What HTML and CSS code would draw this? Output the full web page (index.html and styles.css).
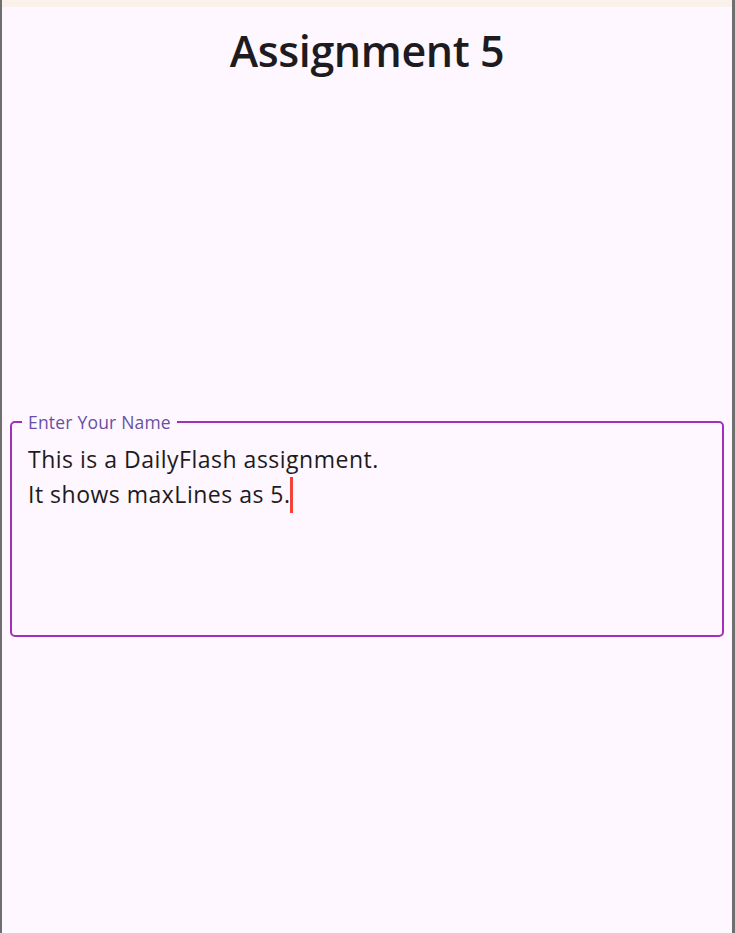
FILE: index.html
```html
<!DOCTYPE html>
<html>
<head>
<meta charset="utf-8">
<link rel="stylesheet" href="styles.css">
</head>
<body>
<div class="frame">
  <div class="side side-left"></div>
  <div class="screen">
    <div class="statusbar"></div>
    <h1 class="title">Assignment 5</h1>
    <div class="spacer"></div>
    <fieldset class="field">
      <legend class="label">Enter Your Name</legend>
      <div class="value">
        <div class="line">This is a DailyFlash assignment.</div>
        <div class="line">It shows maxLines as 5.<span class="cursor"></span></div>
      </div>
    </fieldset>
  </div>
  <div class="side side-right"></div>
</div>
</body>
</html>
```
FILE: styles.css
```css
html, body {
  margin: 0;
  padding: 0;
  height: 100%;
}
body {
  font-family: "Open Sans", "Noto Sans", sans-serif;
  background: #fef7ff;
}
.frame {
  display: flex;
  height: 933px;
  overflow: hidden;
}
.side-left {
  width: 2px;
  background: #6f6f6f;
  flex: none;
}
.side-right {
  width: 3px;
  background: #6f6f6f;
  flex: none;
}
.screen {
  flex: 1;
  display: flex;
  flex-direction: column;
  background: #fef7ff;
}
.statusbar {
  height: 7px;
  background: #f9f1ea;
  flex: none;
}
.title {
  margin: 14px 0 0 0;
  text-align: center;
  font-size: 43px;
  font-weight: 600;
  line-height: 60px;
  color: #1d1b20;
  letter-spacing: -0.4px;
}
.spacer {
  height: 331px;
  flex: none;
}
.field {
  margin: 0 8px;
  padding: 0;
  border: 2px solid #a22fb9;
  border-radius: 5px;
  height: 225px;
  box-sizing: border-box;
  min-inline-size: 0;
}
.label {
  margin-left: 10px;
  padding: 0 6px;
  font-size: 17.5px;
  line-height: 20px;
  letter-spacing: 0.2px;
  color: #6750a4;
}
.value {
  padding: 10px 0 0 16px;
  font-size: 23px;
  line-height: 35px;
  letter-spacing: 0.5px;
  color: #1d1b20;
}
.line {
  white-space: nowrap;
}
.cursor {
  display: inline-block;
  width: 3px;
  height: 36px;
  background: #f44336;
  vertical-align: -10px;
  margin-left: -1px;
}
```
